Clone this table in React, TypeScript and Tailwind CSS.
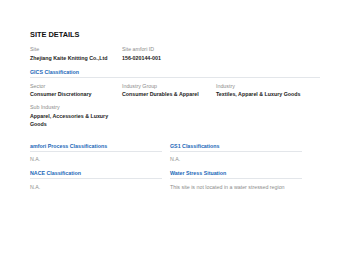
const gics = [
  { label: 'Sector', value: 'Consumer Discretionary' },
  { label: 'Industry Group', value: 'Consumer Durables & Apparel' },
  { label: 'Industry', value: 'Textiles, Apparel & Luxury Goods' },
];

function Field({ label, value, className = '' }: { label: string; value: string; className?: string }) {
  return (
    <div className={className}>
      <div className="text-[5.3px] leading-[8px] text-[#8c8c8c]">{label}</div>
      <div className="mt-[1px] text-[5.3px] leading-[8px] font-bold text-[#222]">{value}</div>
    </div>
  );
}

function Heading({ children }: { children: React.ReactNode }) {
  return (
    <div className="text-[5.3px] leading-[8px] font-bold text-[#2167b8] pb-[1px] border-b border-[#e3e6ea]">
      {children}
    </div>
  );
}

export default function App() {
  return (
    <main className="w-[350px] h-[268px] bg-white pl-[30px] pt-[30px] font-['Liberation_Sans',Arial,sans-serif]">
      <h1 className="text-[7.4px] leading-[10px] font-bold text-[#111]">SITE DETAILS</h1>

      {/* Site */}
      <div className="mt-[5px] flex">
        <Field label="Site" value="Zhejiang Kaite Knitting Co.,Ltd" className="w-[92px]" />
        <Field label="Site amfori ID" value="156-020144-001" />
      </div>

      {/* GICS */}
      <div className="mt-[6px] w-[290px]">
        <Heading>GICS Classification</Heading>
      </div>
      <div className="mt-[4px] grid grid-cols-[92px_94px_104px]">
        {gics.map((g) => (
          <div key={g.label}>
            <div className="text-[5.3px] leading-[8px] text-[#8c8c8c]">{g.label}</div>
            <div className="text-[5.3px] leading-[8px] font-bold text-[#222]">{g.value}</div>
          </div>
        ))}
      </div>
      <div className="mt-[5px] w-[88px]">
        <div className="text-[5.3px] leading-[8px] text-[#8c8c8c]">Sub Industry</div>
        <div className="mt-[1px] text-[5.3px] leading-[8px] font-bold text-[#222]">
          Apparel, Accessories &amp; Luxury Goods
        </div>
      </div>

      {/* Other classifications */}
      <div className="mt-[14px] grid grid-cols-[132px_132px] gap-x-[8px]">
        <div>
          <Heading>amfori Process Classifications</Heading>
          <div className="mt-[3px] text-[5.3px] leading-[8px] text-[#8c8c8c]">N.A.</div>
        </div>
        <div>
          <Heading>GS1 Classifications</Heading>
          <div className="mt-[3px] text-[5.3px] leading-[8px] text-[#8c8c8c]">N.A.</div>
        </div>
        <div className="mt-[6px]">
          <Heading>NACE Classification</Heading>
          <div className="mt-[4px] text-[5.3px] leading-[8px] text-[#8c8c8c]">N.A.</div>
        </div>
        <div className="mt-[6px]">
          <Heading>Water Stress Situation</Heading>
          <div className="mt-[4px] text-[5.3px] leading-[8px] text-[#8c8c8c]">
            This site is not located in a water stressed region
          </div>
        </div>
      </div>
    </main>
  );
}
